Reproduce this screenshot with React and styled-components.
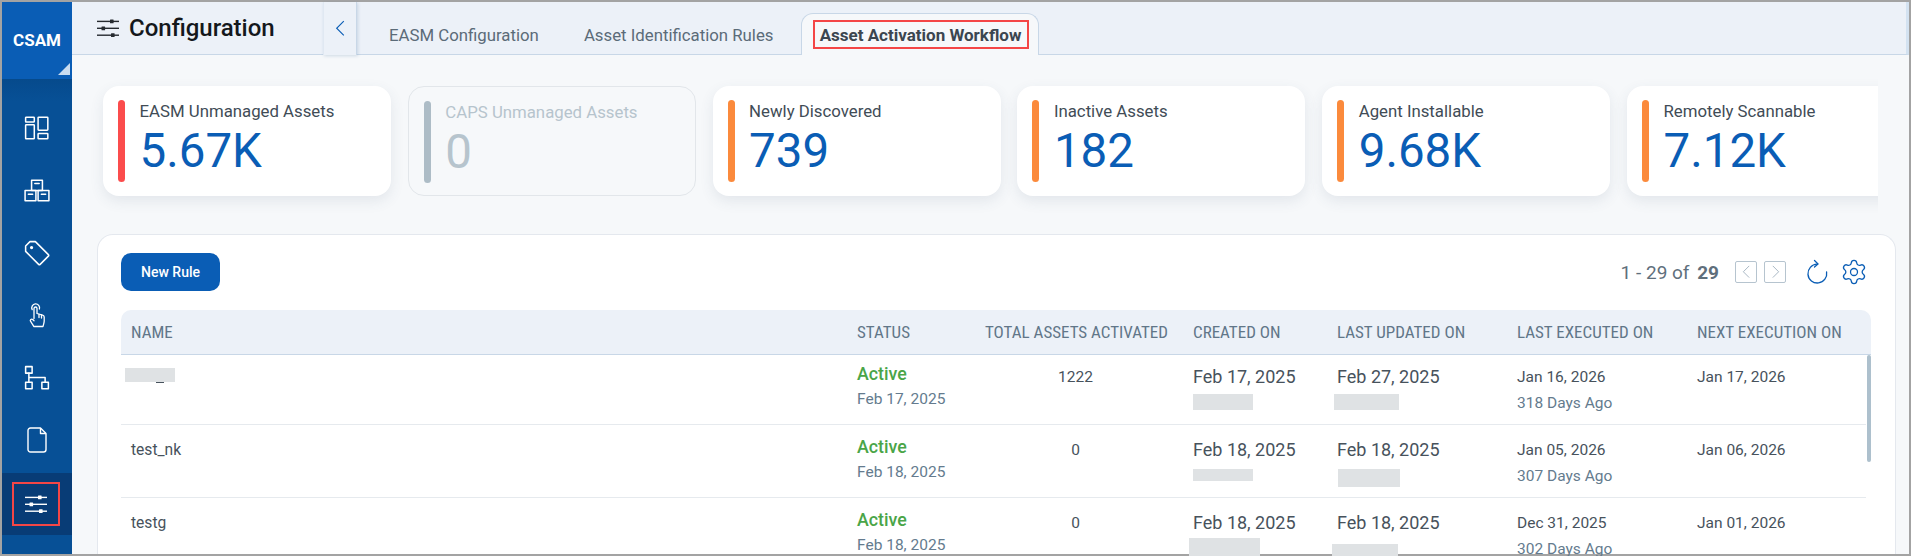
import React from 'react';
import styled, { createGlobalStyle } from 'styled-components';
import { Settings } from 'lucide-react';

const colors = {
  blue: '#0a5db5',
  navy: '#075096',
  navyDark: '#083c76',
  barBg: '#ecf1f8',
  line: '#c8d7e7',
  page: '#f6f8fa',
  text: '#47525c',
  muted: '#647b8e',
  red: '#f44646',
  redBar: '#fb4c4c',
  orange: '#fb8a3c',
  green: '#4aa548',
};

const GlobalStyle = createGlobalStyle`
  html, body {
    margin: 0;
    padding: 0;
    background: #a3a3a3;
  }
  * { box-sizing: border-box; }
`;

const Frame = styled.div`
  width: 1911px;
  height: 556px;
  padding: 2px 2px 2px 2px;
  display: flex;
  overflow: hidden;
  font-family: Roboto, 'Liberation Sans', sans-serif;
  color: ${colors.text};
`;

const Sidebar = styled.nav`
  width: 70px;
  flex: none;
  background: ${colors.navy};
  display: flex;
  flex-direction: column;
`;

const Logo = styled.div`
  height: 77px;
  flex: none;
  background: ${colors.blue};
  color: #fff;
  font-size: 17px;
  font-weight: 700;
  display: flex;
  justify-content: center;
  padding-top: 28px;
  position: relative;
  &::after {
    content: '';
    position: absolute;
    right: 2px;
    bottom: 4px;
    border-style: solid;
    border-width: 0 0 12px 12px;
    border-color: transparent transparent #c9dcf0 transparent;
  }
`;

const NavList = styled.div`
  flex: 1;
  display: flex;
  flex-direction: column;
  padding-top: 21px;
  background: linear-gradient(#064a8c, ${colors.navy} 22px);
`;

const NavItem = styled.div`
  height: 62.4px;
  flex: none;
  display: flex;
  align-items: center;
  justify-content: center;
  color: #fff;
  padding-bottom: 6px;
`;

const ActiveNavItem = styled(NavItem)`
  background: ${colors.navyDark};
  height: 62px;
  padding: 0;
  margin-top: -1px;
`;

const RedBox = styled.div`
  width: 48px;
  height: 44px;
  margin-right: 2px;
  border: 2px solid ${colors.red};
  display: flex;
  align-items: center;
  justify-content: center;
`;

const Content = styled.div`
  flex: 1;
  min-width: 0;
  background: ${colors.page};
  display: flex;
  flex-direction: column;
`;

const TopBar = styled.header`
  height: 53px;
  flex: none;
  display: flex;
  background: ${colors.barBg};
  border-bottom: 1px solid ${colors.line};
  border-right: 3px solid #d3e2f1;
`;

const TitleArea = styled.div`
  width: 251px;
  flex: none;
  display: flex;
  align-items: center;
  gap: 10px;
  padding: 0 0 1px 25px;
  color: #262b30;
`;

const Title = styled.h1`
  margin: 0;
  font-size: 24px;
  font-weight: 500;
  color: #14181c;
`;

const Collapse = styled.button`
  width: 34px;
  height: 53px;
  flex: none;
  border: none;
  border-right: 1px solid ${colors.line};
  border-left: 1px solid #e0e8f2;
  background: ${colors.barBg};
  box-shadow: 1px 1px 3px rgba(90, 130, 170, 0.25);
  display: flex;
  align-items: center;
  justify-content: center;
  padding: 0;
`;

const Tabs = styled.div`
  display: flex;
  align-items: flex-end;
  padding-left: 32px;
`;

const Tab = styled.div`
  font-size: 16.8px;
  padding: 0 0 9px;
  margin-right: 45px;
  color: #5b6b78;
  height: 29px;
  line-height: 20px;
  white-space: nowrap;
`;

const ActiveTab = styled.div`
  width: 238px;
  height: 42px;
  margin: 0 0 -1px -18px;
  background: ${colors.page};
  border: 1px solid ${colors.line};
  border-bottom: none;
  border-radius: 12px 12px 0 0;
  padding: 6px 0 0 11px;
`;

const ActiveTabLabel = styled.div`
  width: 216px;
  height: 29px;
  border: 2px solid ${colors.red};
  font-size: 17px;
  font-weight: 700;
  color: #3b4650;
  display: flex;
  align-items: center;
  justify-content: center;
  white-space: nowrap;
`;

const CardStrip = styled.div`
  display: flex;
  gap: 16.8px;
  margin: 0 31px 0 0;
  padding: 31px 0 38px 31px;
  overflow: hidden;
  flex: none;
`;

const Card = styled.div`
  width: 288px;
  height: 110px;
  flex: none;
  display: flex;
  gap: 14.5px;
  padding: 14px 15px;
  border-radius: 16px;
  background: ${p => (p.$disabled ? colors.page : '#fff')};
  border: ${p => (p.$disabled ? '1px solid #e2e6ea' : 'none')};
  box-shadow: ${p => (p.$disabled ? 'none' : '0 5px 14px rgba(60, 80, 110, 0.1)')};
`;

const CardBar = styled.div`
  width: 7px;
  height: 82px;
  flex: none;
  border-radius: 4px;
  background: ${p => p.$color};
`;

const CardBody = styled.div`
  display: flex;
  flex-direction: column;
`;

const CardLabel = styled.div`
  font-size: 16.8px;
  line-height: 20px;
  margin-top: 1px;
  color: ${p => (p.$disabled ? '#b6c4cd' : '#414c56')};
  white-space: nowrap;
`;

const CardValue = styled.div`
  font-size: 47.5px;
  line-height: 52px;
  margin-top: 4px;
  color: ${p => (p.$disabled ? '#b6c4cd' : colors.blue)};
`;

const Panel = styled.section`
  flex: 1;
  min-height: 0;
  margin: 0 13px 0 25px;
  padding: 18px 24px 0 23px;
  background: #fff;
  border: 1px solid #e4e8ee;
  border-bottom: none;
  border-radius: 16px 16px 0 0;
  display: flex;
  flex-direction: column;
`;

const Toolbar = styled.div`
  height: 38px;
  flex: none;
  display: flex;
  align-items: center;
  justify-content: space-between;
`;

const NewRule = styled.button`
  width: 99px;
  height: 38px;
  border: none;
  border-radius: 10px;
  background: ${colors.blue};
  color: #fff;
  font: 500 14px Roboto, sans-serif;
`;

const Pager = styled.div`
  display: flex;
  align-items: center;
  margin-right: 3px;
`;

const PageText = styled.span`
  font-size: 19px;
  color: #5f6f7c;
  margin-right: 16px;
  white-space: nowrap;
  b {
    font-weight: 700;
    margin-left: 3px;
  }
`;

const PageButton = styled.div`
  width: 22px;
  height: 22px;
  margin-right: 7px;
  border: 1px solid #b6c4cf;
  border-radius: 2px;
  display: flex;
  align-items: center;
  justify-content: center;
`;

const ToolIcon = styled.div`
  display: flex;
  margin-left: ${p => p.$gap}px;
  color: ${colors.blue};
`;

const Table = styled.div`
  margin-top: 19px;
  flex: 1;
  min-height: 0;
  display: flex;
  flex-direction: column;
`;

const columns = '726px 128px 208px 144px 180px 180px 1fr';

const HeadRow = styled.div`
  height: 45px;
  flex: none;
  display: grid;
  grid-template-columns: ${columns};
  align-items: center;
  padding: 0 0 0 10px;
  background: ${colors.barBg};
  border-bottom: 1px solid ${colors.line};
  border-radius: 10px 10px 0 0;
`;

const HeadCell = styled.div`
  font-size: 17px;
  font-stretch: 75%;
  font-family: 'Roboto Condensed', Roboto, sans-serif;
  color: #617688;
  white-space: nowrap;
`;

const Body = styled.div`
  position: relative;
  flex: 1;
  min-height: 0;
  padding-right: 5px;
`;

const Scroller = styled.div`
  position: absolute;
  right: 0;
  top: 0;
  width: 4px;
  height: 107px;
  border-radius: 2px;
  background: #adc0cd;
`;

const Row = styled.div`
  height: ${p => p.$height}px;
  display: grid;
  grid-template-columns: ${columns};
  padding: ${p => p.$top}px 0 0 10px;
  border-bottom: 1px solid #e6eaee;
`;

const NameCell = styled.div`
  font-size: 15.6px;
  line-height: 22px;
  padding-top: 2px;
  color: ${colors.text};
`;

const Stack = styled.div`
  display: flex;
  flex-direction: column;
  align-items: flex-start;
`;

const CountCell = styled.div`
  width: 181px;
  text-align: center;
  font-size: 15.5px;
  line-height: 22px;
  padding-top: 2px;
`;

const StatusText = styled.div`
  font-size: 17.8px;
  font-weight: 500;
  line-height: 20px;
  color: ${colors.green};
`;

const SubText = styled.div`
  font-size: 15.5px;
  line-height: 20px;
  margin-top: 5px;
  color: ${colors.muted};
`;

const DateBig = styled.div`
  font-size: 18px;
  line-height: 22px;
  padding-top: 2px;
`;

const DateSmall = styled.div`
  font-size: 15.5px;
  line-height: 22px;
  padding-top: 2px;
`;

const Redacted = styled.div`
  width: ${p => p.$w}px;
  height: ${p => p.$h}px;
  margin: ${p => p.$top}px 0 0 ${p => p.$left || 0}px;
  background: #dfe2e4;
`;

const Underscore = styled.div`
  width: 8px;
  height: 1px;
  margin-left: 25px;
  background: ${colors.text};
`;

const Ic = ({ children, size = 26 }) => (
  <svg width={size} height={size} viewBox="0 0 24 24" fill="none" stroke="currentColor" strokeWidth="1.4" strokeLinejoin="round" strokeLinecap="round">
    {children}
  </svg>
);

const DashboardIcon = () => (
  <Ic>
    <rect x="1.5" y="2" width="8" height="4.5" rx=".6" />
    <rect x="1.5" y="9" width="8" height="13" rx=".6" />
    <rect x="13" y="2" width="9" height="12" rx=".6" />
    <rect x="13" y="17" width="9" height="5" rx=".6" />
  </Ic>
);

const BoxesIcon = () => (
  <Ic>
    <rect x="7" y="2" width="10" height="9.5" />
    <rect x="1" y="11.5" width="10" height="9.5" />
    <rect x="13" y="11.5" width="10" height="9.5" />
    <path d="M10 5h4M4 15h4M16 15h4" />
  </Ic>
);

const TagIcon = () => (
  <Ic>
    <path d="M1.5 5.5 5.5 1.5h5l12 12a1 1 0 0 1 0 1.4l-7.6 7.6a1 1 0 0 1-1.4 0l-12-12z" />
    <circle cx="7" cy="7" r=".8" fill="currentColor" />
  </Ic>
);

const TouchIcon = () => (
  <svg width="16" height="25" viewBox="0 0 16 25" fill="none" stroke="currentColor" strokeWidth="1.3" strokeLinejoin="round" strokeLinecap="round">
    <path d="M3.2 6.6A3.9 3.9 0 1 1 10.4 6" />
    <path d="M5 15.5V5.5a1.5 1.5 0 0 1 3 0v5l5.6 1.6c1 .3 1.6 1 1.6 2v4c0 2-.8 3.3-1.2 5.4H4.8C4 21.5 2.6 20 1.5 18.2c-.8-1.4.9-2.8 2.2-1.6L5 17.8" />
    <path d="M10 11.5v3M12.5 12v3" />
  </svg>
);

const TreeIcon = () => (
  <Ic>
    <rect x="1.5" y="1.5" width="6" height="6" />
    <rect x="1.5" y="16" width="6" height="6" />
    <rect x="16.5" y="16" width="6" height="6" />
    <path d="M4.5 7.5V16M4.5 11.5H19.5V16" />
  </Ic>
);

const DocIcon = () => (
  <svg width="20" height="26" viewBox="0 0 20 26" fill="none" stroke="currentColor" strokeWidth="1.4" strokeLinejoin="round">
    <path d="M1 3.5a2.5 2.5 0 0 1 2.5-2.5H13.5L19 6.5v16a2.5 2.5 0 0 1-2.5 2.5h-13A2.5 2.5 0 0 1 1 22.5z" />
    <path d="M13.5 1v5.5H19" />
  </svg>
);

const SlidersIcon = () => (
  <svg width="22" height="20" viewBox="0 0 22 20" fill="currentColor" stroke="none">
    <rect x="0" y="2.7" width="22" height="1.4" />
    <rect x="0" y="9.6" width="22" height="1.4" />
    <rect x="0" y="16.5" width="22" height="1.4" />
    <rect x="13" y="1.5" width="3.6" height="3.8" rx=".5" />
    <rect x="4.5" y="8.4" width="3.6" height="3.8" rx=".5" />
    <rect x="14" y="15.3" width="3.6" height="3.8" rx=".5" />
  </svg>
);

const Chevron = ({ dir, color, size = 11 }) => (
  <svg width={size} height={size * 1.5} viewBox="0 0 10 15" fill="none" stroke={color} strokeWidth="1">
    <path d={dir === 'left' ? 'M8 1 1.5 7.5 8 14' : 'M2 1l6.5 6.5L2 14'} />
  </svg>
);

const RefreshIcon = () => (
  <svg width="24" height="26" viewBox="0 0 24 26" fill="none" stroke="currentColor" strokeWidth="1.3" strokeLinecap="round">
    <path d="M11 5.2A9.4 9.4 0 1 0 20.6 13" />
    <path d="M8.5 1.5 12 5l-3.5 3" />
  </svg>
);

const cards = [
  { label: 'EASM Unmanaged Assets', value: '5.67K', color: colors.redBar },
  { label: 'CAPS Unmanaged Assets', value: '0', color: '#adbcc6', disabled: true },
  { label: 'Newly Discovered', value: '739', color: colors.orange },
  { label: 'Inactive Assets', value: '182', color: colors.orange },
  { label: 'Agent Installable', value: '9.68K', color: colors.orange },
  { label: 'Remotely Scannable', value: '7.12K', color: colors.orange },
];

const headers = ['NAME', 'STATUS', 'TOTAL ASSETS ACTIVATED', 'CREATED ON', 'LAST UPDATED ON', 'LAST EXECUTED ON', 'NEXT EXECUTION ON'];

const rows = [
  {
    name: '',
    height: 70,
    top: 9,
    status: 'Feb 17, 2025',
    total: '1222',
    created: 'Feb 17, 2025',
    createdMask: { w: 60, h: 16, top: 6 },
    updated: 'Feb 27, 2025',
    updatedMask: { w: 65, h: 16, top: 6, left: -3 },
    executed: 'Jan 16, 2026',
    ago: '318 Days Ago',
    next: 'Jan 17, 2026',
  },
  {
    name: 'test_nk',
    height: 73,
    top: 12,
    status: 'Feb 18, 2025',
    total: '0',
    created: 'Feb 18, 2025',
    createdMask: { w: 60, h: 12, top: 8 },
    updated: 'Feb 18, 2025',
    updatedMask: { w: 62, h: 18, top: 8, left: 1 },
    executed: 'Jan 05, 2026',
    ago: '307 Days Ago',
    next: 'Jan 06, 2026',
  },
  {
    name: 'testg',
    height: 73,
    top: 12,
    status: 'Feb 18, 2025',
    total: '0',
    created: 'Feb 18, 2025',
    createdMask: { w: 71, h: 18, top: 4, left: -4 },
    updated: 'Feb 18, 2025',
    updatedMask: { w: 66, h: 14, top: 10, left: -5 },
    executed: 'Dec 31, 2025',
    ago: '302 Days Ago',
    next: 'Jan 01, 2026',
  },
];

export default function App() {
  return (
    <Frame>
      <GlobalStyle />
      <Sidebar>
        <Logo>CSAM</Logo>
        <NavList>
          <NavItem><DashboardIcon /></NavItem>
          <NavItem><BoxesIcon /></NavItem>
          <NavItem><TagIcon /></NavItem>
          <NavItem><TouchIcon /></NavItem>
          <NavItem><TreeIcon /></NavItem>
          <NavItem><DocIcon /></NavItem>
          <ActiveNavItem>
            <RedBox><SlidersIcon /></RedBox>
          </ActiveNavItem>
        </NavList>
      </Sidebar>
      <Content>
        <TopBar>
          <TitleArea>
            <SlidersIcon />
            <Title>Configuration</Title>
          </TitleArea>
          <Collapse><Chevron dir="left" color={colors.blue} /></Collapse>
          <Tabs>
            <Tab>EASM Configuration</Tab>
            <Tab>Asset Identification Rules</Tab>
            <ActiveTab>
              <ActiveTabLabel>Asset Activation Workflow</ActiveTabLabel>
            </ActiveTab>
          </Tabs>
        </TopBar>
        <CardStrip>
          {cards.map(card => (
            <Card key={card.label} $disabled={card.disabled}>
              <CardBar $color={card.color} />
              <CardBody>
                <CardLabel $disabled={card.disabled}>{card.label}</CardLabel>
                <CardValue $disabled={card.disabled}>{card.value}</CardValue>
              </CardBody>
            </Card>
          ))}
        </CardStrip>
        <Panel>
          <Toolbar>
            <NewRule>New Rule</NewRule>
            <Pager>
              <PageText>1 - 29 of <b>29</b></PageText>
              <PageButton><Chevron dir="left" color="#9fb0bd" size={9} /></PageButton>
              <PageButton><Chevron dir="right" color="#9fb0bd" size={9} /></PageButton>
              <ToolIcon $gap={13}><RefreshIcon /></ToolIcon>
              <ToolIcon $gap={10}><Settings size={28} strokeWidth={1.1} /></ToolIcon>
            </Pager>
          </Toolbar>
          <Table>
            <HeadRow>
              {headers.map(h => <HeadCell key={h}>{h}</HeadCell>)}
            </HeadRow>
            <Body>
              <Scroller />
              {rows.map(row => (
                <Row key={row.next} $height={row.height} $top={row.top}>
                  <NameCell>
                    {row.name || (
                      <>
                        <Redacted $w={50} $h={14} $top={2} $left={-6} />
                        <Underscore />
                      </>
                    )}
                  </NameCell>
                  <Stack>
                    <StatusText>Active</StatusText>
                    <SubText>{row.status}</SubText>
                  </Stack>
                  <CountCell>{row.total}</CountCell>
                  <Stack>
                    <DateBig>{row.created}</DateBig>
                    <Redacted $w={row.createdMask.w} $h={row.createdMask.h} $top={row.createdMask.top} $left={row.createdMask.left} />
                  </Stack>
                  <Stack>
                    <DateBig>{row.updated}</DateBig>
                    <Redacted $w={row.updatedMask.w} $h={row.updatedMask.h} $top={row.updatedMask.top} $left={row.updatedMask.left} />
                  </Stack>
                  <Stack>
                    <DateSmall>{row.executed}</DateSmall>
                    <SubText>{row.ago}</SubText>
                  </Stack>
                  <DateSmall>{row.next}</DateSmall>
                </Row>
              ))}
            </Body>
          </Table>
        </Panel>
      </Content>
    </Frame>
  );
}
